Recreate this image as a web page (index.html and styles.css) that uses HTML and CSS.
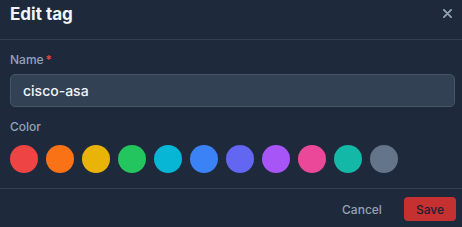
FILE: index.html
```html
<!DOCTYPE html>
<html lang="en">
<head>
    <meta charset="UTF-8">
    <meta name="viewport" content="width=device-width, initial-scale=1.0">
    <title>Edit tag</title>
    <link rel="stylesheet" href="styles.css">
</head>
<body>
    <div class="modal">
        <div class="modal-header">
            <h2 class="modal-title">Edit tag</h2>
            <button class="close-btn" aria-label="Close">
                <svg width="9" height="9" viewBox="0 0 10 10">
                    <path d="M1 1 L9 9 M9 1 L1 9" stroke="currentColor" stroke-width="2" stroke-linecap="round"/>
                </svg>
            </button>
        </div>
        <div class="modal-body">
            <label class="field-label">Name<span class="required">*</span></label>
            <input class="text-input" type="text" value="cisco-asa">

            <label class="field-label color-label">Color</label>
            <div class="swatches">
                <span class="swatch" style="background: #ef4444"></span>
                <span class="swatch" style="background: #f97316"></span>
                <span class="swatch" style="background: #eab308"></span>
                <span class="swatch" style="background: #22c55e"></span>
                <span class="swatch" style="background: #06b6d4"></span>
                <span class="swatch" style="background: #3b82f6"></span>
                <span class="swatch" style="background: #6366f1"></span>
                <span class="swatch" style="background: #a855f7"></span>
                <span class="swatch" style="background: #ec4899"></span>
                <span class="swatch" style="background: #14b8a6"></span>
                <span class="swatch" style="background: #64748b"></span>
            </div>
        </div>
        <div class="modal-footer">
            <button class="btn btn-cancel">Cancel</button>
            <button class="btn btn-save">Save</button>
        </div>
    </div>
</body>
</html>
```

FILE: styles.css
```css
body {
    margin: 0;
    background-color: #1e293b;
    font-family: Inter, "Noto Sans", sans-serif;
    color: #e2e8f0;
}

.modal {
    width: 462px;
    height: 227px;
}

.modal-header {
    display: flex;
    justify-content: space-between;
    align-items: flex-start;
    height: 36px;
    padding: 3px 4px 0 10px;
    border-bottom: 1px solid #334155;
}

.modal-title {
    margin: 0;
    font-size: 17px;
    line-height: 22px;
    font-weight: 700;
    color: #f1f5f9;
}

.close-btn {
    background: none;
    border: none;
    padding: 6px;
    color: #94a3b8;
    display: flex;
}

.modal-body {
    padding: 12px 7px 0 10px;
    height: 136px;
    border-bottom: 1px solid #334155;
}

.field-label {
    display: block;
    font-size: 12px;
    line-height: 16px;
    font-weight: 500;
    color: #94a3b8;
}

.required {
    color: #ef4444;
    margin-left: 2px;
}

.text-input {
    display: block;
    box-sizing: border-box;
    width: 445px;
    height: 33px;
    margin-top: 6px;
    padding: 0 12px;
    background-color: #334155;
    border: 1px solid #475569;
    border-radius: 5px;
    font-family: inherit;
    font-size: 14px;
    font-weight: 500;
    color: #f1f5f9;
    outline: none;
}

.color-label {
    margin-top: 12px;
}

.swatches {
    display: flex;
    gap: 8px;
    margin-top: 10px;
}

.swatch {
    width: 28px;
    height: 28px;
    border-radius: 50%;
}

.modal-footer {
    display: flex;
    justify-content: flex-end;
    align-items: center;
    gap: 10px;
    padding: 8px 6px 0 10px;
}

.btn {
    font-family: inherit;
    font-size: 12px;
    font-weight: 500;
    height: 24px;
    border: none;
    border-radius: 4px;
    padding: 0 12px;
    cursor: pointer;
}

.btn-cancel {
    background: none;
    color: #94a3b8;
}

.btn-save {
    background-color: #c53030;
    color: #1a2232;
}
```
